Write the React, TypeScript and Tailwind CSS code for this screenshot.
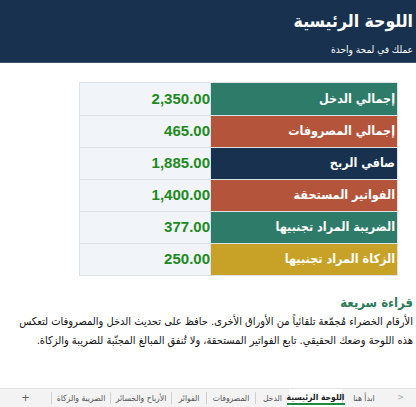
import React from "react";

const rows = [
  { label: "إجمالي الدخل", value: "2,350.00", bg: "bg-[#2e7b69]" },
  { label: "إجمالي المصروفات", value: "465.00", bg: "bg-[#b4543b]" },
  { label: "صافي الربح", value: "1,885.00", bg: "bg-[#17314e]" },
  { label: "الفواتير المستحقة", value: "1,400.00", bg: "bg-[#b4543b]" },
  { label: "الضريبة المراد تجنبيها", value: "377.00", bg: "bg-[#2e7b69]" },
  { label: "الزكاة المراد تجنبيها", value: "250.00", bg: "bg-[#c8a226]" },
];

const AR = '"DejaVu Sans Condensed", "DejaVu Sans", sans-serif';
const NUM = '"Liberation Sans", Arial, sans-serif';

export default function App() {
  return (
    <div
      dir="rtl"
      className="w-[416px] h-[407px] bg-white flex flex-col overflow-hidden font-stretch-condensed"
      style={{ fontFamily: AR }}
    >
      <div className="h-[63px] bg-[#17314e] border-b border-[#3d5570] pr-[3px] pt-[8px] flex flex-col">
        <div className="text-white text-[17.5px] font-bold leading-[26px]">اللوحة الرئيسية</div>
        <div className="text-white text-[10px] leading-[14px] mt-[9px]">عملك في لمحة واحدة</div>
      </div>
      <div className="flex-1 flex flex-col">
        <div className="pr-[18px] pt-[19px]">
          <div className="w-[319px] border border-[#dde2e7]">
            {rows.map((r, i) => (
              <div key={i} className={`flex h-[32px] ${i > 0 ? "border-t border-[#dde2e7]" : ""}`}>
                <div className={`w-[186px] ${r.bg} text-white text-[12.5px] font-bold flex items-center pr-[2px] whitespace-nowrap`}>
                  {r.label}
                </div>
                <div
                  className="flex-1 bg-[#f1f4f8] border-r border-[#dde2e7] flex items-center justify-end pl-[3px] text-[#1e8a1e] text-[15px] font-bold"
                  dir="ltr"
                  style={{ fontFamily: NUM, fontStretch: "normal" }}
                >
                  <span>{r.value}</span>
                </div>
              </div>
            ))}
          </div>
        </div>
        <div className="pr-[3px] pl-[6px] pt-[19px]">
          <div className="text-[#2d7b5d] text-[13px] font-bold leading-[16px]">قراءة سريعة</div>
          <p className="text-[#111] text-[11px] leading-[19px] mt-[1px]">
            الأرقام الخضراء مُجمّعة تلقائياً من الأوراق الأخرى. حافظ على تحديث الدخل والمصروفات لتعكس هذه اللوحة وضعك الحقيقي. تابع الفواتير المستحقة، ولا تُنفق المبالغ المجنّبة للضريبة والزكاة.
          </p>
        </div>
      </div>
      <div className="h-[19px] bg-[#f3f3f3] border-t border-[#e3e3e3] flex items-stretch text-[8.5px] text-[#555] whitespace-nowrap">
        <div className="w-[31px] flex items-center justify-center text-[#aaa] text-[9px]">&lt;</div>
        <div className="w-[42px] flex items-center justify-center">ابدأ هنا</div>
        <div className="w-px my-[3px] bg-[#d0d0d0]" />
        <div className="w-[53px] bg-white flex items-center justify-center">
          <span className="font-bold text-[#222] border-b-2 border-[#1e8a3e] leading-[12px]">اللوحة الرئيسية</span>
        </div>
        <div className="w-[33px] flex items-center justify-center">الدخل</div>
        <div className="w-px my-[3px] bg-[#d0d0d0]" />
        <div className="w-[48px] flex items-center justify-center">المصروفات</div>
        <div className="w-px my-[3px] bg-[#d0d0d0]" />
        <div className="w-[34px] flex items-center justify-center">الفوائر</div>
        <div className="w-px my-[3px] bg-[#d0d0d0]" />
        <div className="w-[60px] flex items-center justify-center">الأرباح والخسائر</div>
        <div className="w-px my-[3px] bg-[#d0d0d0]" />
        <div className="w-[58px] flex items-center justify-center">الضريبة والزكاة</div>
        <div className="w-px my-[3px] bg-[#d0d0d0]" />
        <div className="flex-1 flex items-center justify-center text-[13px] text-[#666]" style={{ fontFamily: NUM }}>+</div>
      </div>
    </div>
  );
}
